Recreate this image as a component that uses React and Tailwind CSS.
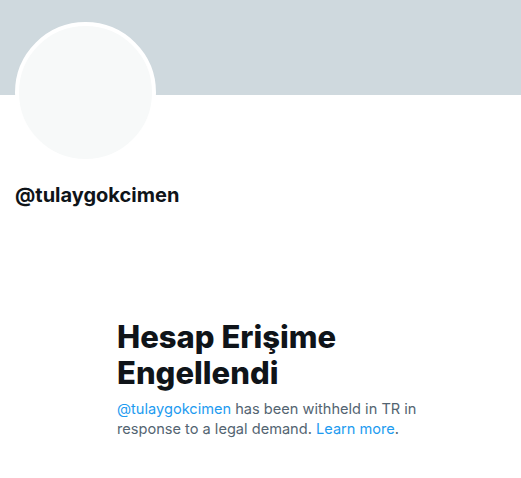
export default function App() {
  return (
    <div className="w-[521px] h-[478px] bg-white overflow-hidden" style={{ fontFamily: "Inter, 'Noto Sans', sans-serif" }}>
      <div className="h-[95px] bg-[#cfd9de]" />
      <div className="px-[15px]">
        <div className="-mt-[73px] w-[141px] h-[141px] rounded-full border-4 border-white bg-[#f7f9f9]" />
        <div className="mt-[20px] text-[20px] leading-[24px] font-bold text-[#0f1419]">@tulaygokcimen</div>
      </div>
      <div className="mt-[112px] ml-[117px] w-[336px]">
        <div className="text-[31px] leading-[36px] font-extrabold text-[#0f1419]">Hesap Erişime Engellendi</div>
        <div className="mt-[8px] text-[14.6px] leading-[20px] text-[#536471]">
          <span className="text-[#1d9bf0]">@tulaygokcimen</span> has been withheld in TR in response to a legal demand. <span className="text-[#1d9bf0]">Learn more</span>.
        </div>
      </div>
    </div>
  );
}
